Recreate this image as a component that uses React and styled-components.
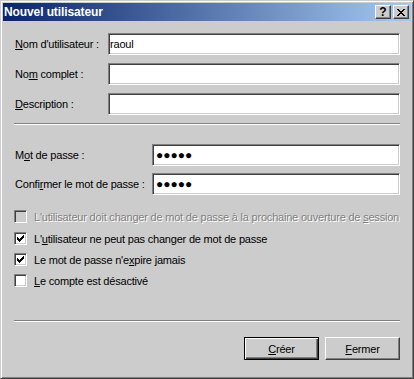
import React from "react";
import styled, { createGlobalStyle } from "styled-components";

const FACE = "#cccccc";
const FONT = `"Liberation Sans", Arial, sans-serif`;

const GlobalStyle = createGlobalStyle`
  html, body { margin: 0; padding: 0; background: ${FACE}; }
  body { font-family: ${FONT}; font-size: 11px; }
  * { box-sizing: border-box; }
`;

const Window = styled.div`
  width: 414px;
  height: 379px;
  display: flex;
  flex-direction: column;
  background: ${FACE};
  border: 1px solid;
  border-color: ${FACE} #404040 #404040 ${FACE};
  box-shadow: inset 1px 1px #ffffff, inset -1px -1px #808080;
  padding: 2px;
`;

const TitleBar = styled.div`
  height: 18px;
  flex: none;
  display: flex;
  align-items: center;
  justify-content: space-between;
  padding: 0 2px 0 1px;
  background: linear-gradient(to right, #0a246a, #a6caf0);
`;

const Title = styled.span`
  color: #ffffff;
  font-weight: bold;
  font-size: 12px;
  letter-spacing: -0.1px;
  white-space: nowrap;
`;

const TitleButtons = styled.div`
  display: flex;
  gap: 2px;
`;

const TitleButton = styled.div`
  width: 16px;
  height: 14px;
  background: ${FACE};
  display: flex;
  align-items: center;
  justify-content: center;
  border: 1px solid;
  border-color: #ffffff #404040 #404040 #ffffff;
  box-shadow: inset -1px -1px #808080;
  color: #000;
  font-weight: bold;
  font-size: 12px;
  line-height: 1;
`;

const Body = styled.div`
  flex: 1;
  display: flex;
  flex-direction: column;
  padding: 12px 11px 0;
`;

const FieldGroup = styled.div`
  display: flex;
  flex-direction: column;
  gap: ${(p) => p.$gap}px;
  margin-top: ${(p) => p.$mt || 0}px;
`;

const FieldRow = styled.div`
  display: flex;
  align-items: center;
  height: 22px;
`;

const Label = styled.label`
  width: ${(p) => p.$w}px;
  flex: none;
  padding-left: 1px;
  color: #000;
  letter-spacing: -0.2px;
  white-space: nowrap;
`;

const TextBox = styled.input`
  flex: 1;
  min-width: 0;
  height: 22px;
  margin: 0;
  padding: 0 0 0 ${(p) => (p.$password ? 3 : 1)}px;
  border: 1px solid;
  border-color: #808080 #ffffff #ffffff #808080;
  box-shadow: inset 1px 1px #404040, inset -1px -1px ${FACE};
  background: #ffffff;
  color: #000;
  font-family: ${FONT};
  font-size: ${(p) => (p.$password ? 12 : 11)}px;
  letter-spacing: ${(p) => (p.$password ? "0px" : "-0.2px")};
  outline: none;
`;

const Separator = styled.div`
  height: 2px;
  flex: none;
  border-top: 1px solid #808080;
  border-bottom: 1px solid #ffffff;
  margin-top: ${(p) => p.$mt}px;
`;

const CheckList = styled.div`
  display: flex;
  flex-direction: column;
  margin-top: 15px;
`;

const CheckRow = styled.div`
  display: flex;
  align-items: center;
  height: 13px;
  gap: 7px;
  margin-top: ${(p) => p.$mt || 0}px;
  color: ${(p) => (p.$disabled ? "#808080" : "#000")};
  text-shadow: ${(p) => (p.$disabled ? "1px 1px 0 #ffffff" : "none")};
  letter-spacing: -0.2px;
  white-space: nowrap;
`;

const Box = styled.span`
  width: 13px;
  height: 13px;
  flex: none;
  padding: 2px;
  display: block;
  border: 1px solid;
  border-color: #808080 #ffffff #ffffff #808080;
  box-shadow: inset 1px 1px #404040, inset -1px -1px ${FACE};
  background: ${(p) => (p.$disabled ? FACE : "#ffffff")};
  svg { display: block; }
`;

const Key = styled.span`
  text-decoration: underline;
  text-underline-offset: 1px;
`;

const ButtonRow = styled.div`
  display: flex;
  justify-content: flex-end;
  gap: 6px;
  margin-top: 15px;
`;

const Button = styled.button`
  width: 75px;
  height: 23px;
  margin: 0;
  padding: 0;
  background: ${FACE};
  color: #000;
  font-family: ${FONT};
  font-size: 11px;
  letter-spacing: -0.2px;
  border: 1px solid;
  border-color: ${(p) =>
    p.$default ? "#000000" : "#ffffff #404040 #404040 #ffffff"};
  box-shadow: ${(p) =>
    p.$default
      ? "inset 1px 1px #ffffff, inset -1px -1px #404040, inset -2px -2px #808080"
      : "inset -1px -1px #808080"};
  outline: none;
`;

const CheckMark = () => {
  const starts = [2, 3, 4, 3, 2, 1, 0];
  const d = starts.map((s, i) => `M${i} ${s}h1v3h-1z`).join("");
  return (
    <svg width="7" height="7" viewBox="0 0 7 7" shapeRendering="crispEdges">
      <path d={d} fill="#000" />
    </svg>
  );
};

const CloseGlyph = () => {
  const rows = [
    [0, 1, 6, 7],
    [1, 2, 5, 6],
    [2, 3, 4, 5],
    [3, 4],
    [2, 3, 4, 5],
    [1, 2, 5, 6],
    [0, 1, 6, 7],
  ];
  const d = rows
    .map((cols, y) => cols.map((x) => `M${x} ${y}h1v1h-1z`).join(""))
    .join("");
  return (
    <svg width="8" height="7" viewBox="0 0 8 7" shapeRendering="crispEdges">
      <path d={d} fill="#000" />
    </svg>
  );
};

const Check = ({ checked, disabled, mt, children }) => (
  <CheckRow $disabled={disabled} $mt={mt}>
    <Box $disabled={disabled}>{checked && <CheckMark />}</Box>
    <span>{children}</span>
  </CheckRow>
);

export default function App() {
  return (
    <>
      <GlobalStyle />
      <Window>
        <TitleBar>
          <Title>Nouvel utilisateur</Title>
          <TitleButtons>
            <TitleButton>?</TitleButton>
            <TitleButton>
              <CloseGlyph />
            </TitleButton>
          </TitleButtons>
        </TitleBar>
        <Body>
          <FieldGroup $gap={8}>
            <FieldRow>
              <Label $w={94}>
                <Key>N</Key>om d'utilisateur :
              </Label>
              <TextBox readOnly defaultValue="raoul" />
            </FieldRow>
            <FieldRow>
              <Label $w={94}>
                No<Key>m</Key> complet :
              </Label>
              <TextBox readOnly defaultValue="" />
            </FieldRow>
            <FieldRow>
              <Label $w={94}>
                <Key>D</Key>escription :
              </Label>
              <TextBox readOnly defaultValue="" />
            </FieldRow>
          </FieldGroup>
          <Separator $mt={8} />
          <FieldGroup $gap={7} $mt={19}>
            <FieldRow>
              <Label $w={138}>
                M<Key>o</Key>t de passe :
              </Label>
              <TextBox readOnly $password defaultValue="●●●●●" />
            </FieldRow>
            <FieldRow>
              <Label $w={138}>
                Confi<Key>r</Key>mer le mot de passe :
              </Label>
              <TextBox readOnly $password defaultValue="●●●●●" />
            </FieldRow>
          </FieldGroup>
          <CheckList>
            <Check disabled>
              L'utilisateur doit changer de mot de passe à la prochaine
              ouverture de <Key>s</Key>ession
            </Check>
            <Check checked mt={9}>
              L'<Key>u</Key>tilisateur ne peut pas changer de mot de passe
            </Check>
            <Check checked mt={8}>
              Le mot de passe n'e<Key>x</Key>pire jamais
            </Check>
            <Check mt={8}>
              <Key>L</Key>e compte est désactivé
            </Check>
          </CheckList>
          <Separator $mt={33} />
          <ButtonRow>
            <Button $default>
              <Key>C</Key>réer
            </Button>
            <Button>
              <Key>F</Key>ermer
            </Button>
          </ButtonRow>
        </Body>
      </Window>
    </>
  );
}
